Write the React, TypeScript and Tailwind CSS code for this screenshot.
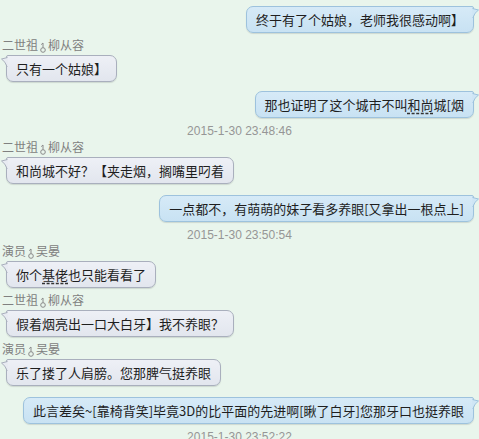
import React from "react";

type Item =
    | { kind: "me"; text: React.ReactNode; mt: string }
    | { kind: "them"; name: string; flag: string; text: React.ReactNode; mt: string }
    | { kind: "time"; text: string; mt: string };

const Dash = ({ children }: { children: React.ReactNode }) => (
    <span className="underline decoration-dashed decoration-[#333] underline-offset-[3px]">{children}</span>
);

const items: Item[] = [
    { kind: "me", text: "终于有了个姑娘，老师我很感动啊】", mt: "mt-[6px]" },
    { kind: "them", name: "二世祖", flag: "柳从容", text: "只有一个姑娘】", mt: "mt-[5px]" },
    { kind: "me", text: <>那也证明了这个城市不叫<Dash>和尚</Dash>城[烟</>, mt: "mt-[9px]" },
    { kind: "time", text: "2015-1-30 23:48:46", mt: "mt-[5px]" },
    { kind: "them", name: "二世祖", flag: "柳从容", text: "和尚城不好？【夹走烟，搁嘴里叼着", mt: "mt-[1px]" },
    { kind: "me", text: "一点都不，有萌萌的妹子看多养眼[又拿出一根点上]", mt: "mt-[11px]" },
    { kind: "time", text: "2015-1-30 23:50:54", mt: "mt-[5px]" },
    { kind: "them", name: "演员", flag: "吴晏", text: <>你个<Dash>基佬</Dash>也只能看看了</>, mt: "mt-[1px]" },
    { kind: "them", name: "二世祖", flag: "柳从容", text: "假着烟亮出一口大白牙】我不养眼？", mt: "mt-[5px]" },
    { kind: "them", name: "演员", flag: "吴晏", text: "乐了搂了人肩膀。您那脾气挺养眼", mt: "mt-[5px]" },
    { kind: "me", text: "此言差矣~[靠椅背笑]毕竟3D的比平面的先进啊[瞅了白牙]您那牙口也挺养眼", mt: "mt-[11px]" },
    { kind: "time", text: "2015-1-30 23:52:22", mt: "mt-[5px]" },
];

function Male() {
    return (
        <svg width="8" height="11" viewBox="0 0 8 11" className="inline-block mx-[1px] -mb-[1px]">
            <circle cx="4" cy="8" r="2.3" fill="none" stroke="#8a8a8a" strokeWidth="1" />
            <path d="M4 5.7 V1 M4 1 L2.2 2.6" fill="none" stroke="#8a8a8a" strokeWidth="1" />
        </svg>
    );
}

function Bubble({ me, children }: { me: boolean; children: React.ReactNode }) {
    const fill = me ? "#cfe6f5" : "#e8ebf2";
    const line = me ? "#9dc2dd" : "#a9afbd";
    return (
        <div
            className={
                "relative inline-block border px-[9px] py-[5px] text-[13px] leading-[15px] text-[#1e1e1e] whitespace-nowrap shadow-[0_1px_1px_rgba(0,0,0,0.12)] " +
                (me
                    ? "rounded-[7px] rounded-tr-[2px] border-[#9dc2dd] bg-gradient-to-b from-[#d6eaf7] to-[#c8e2f3]"
                    : "rounded-[7px] rounded-tl-[2px] border-[#a9afbd] bg-gradient-to-b from-[#eef0f6] to-[#e2e6ee]")
            }
        >
            {me ? (
                <svg width="7" height="11" viewBox="0 0 7 11" className="absolute -right-[6px] top-[1px]">
                    <path d="M0 0.5 L6.5 2 Q2.5 4.5 0.8 10 L0 10 Z" fill={fill} />
                    <path d="M0.5 0.5 L6.5 2 Q2.5 4.5 0.8 10" fill="none" stroke={line} strokeWidth="1" />
                </svg>
            ) : (
                <svg width="7" height="11" viewBox="0 0 7 11" className="absolute -left-[6px] top-[1px]">
                    <path d="M7 0.5 L0.5 2 Q4.5 4.5 6.2 10 L7 10 Z" fill={fill} />
                    <path d="M6.5 0.5 L0.5 2 Q4.5 4.5 6.2 10" fill="none" stroke={line} strokeWidth="1" />
                </svg>
            )}
            {children}
        </div>
    );
}

export default function App() {
    return (
        <div className="min-h-screen w-full overflow-hidden bg-[#e9f5ec] font-['Noto_Sans_CJK_SC',sans-serif]">
            <div className="flex flex-col">
                {items.map((it, i) => {
                    if (it.kind === "time") {
                        return (
                            <div key={i} className={"text-center font-['Liberation_Sans',sans-serif] text-[12px] leading-[16px] text-[#969696] " + it.mt}>
                                {it.text}
                            </div>
                        );
                    }
                    if (it.kind === "me") {
                        return (
                            <div key={i} className={"flex justify-end pr-[5px] " + it.mt}>
                                <Bubble me>{it.text}</Bubble>
                            </div>
                        );
                    }
                    return (
                        <div key={i} className={"flex flex-col items-start " + it.mt}>
                            <div className="pl-[2px] text-[12px] leading-[14px] text-[#808080]">
                                {it.name}
                                <Male />
                                {it.flag}
                            </div>
                            <div className="mt-[3px] pl-[6px]">
                                <Bubble me={false}>{it.text}</Bubble>
                            </div>
                        </div>
                    );
                })}
            </div>
        </div>
    );
}
